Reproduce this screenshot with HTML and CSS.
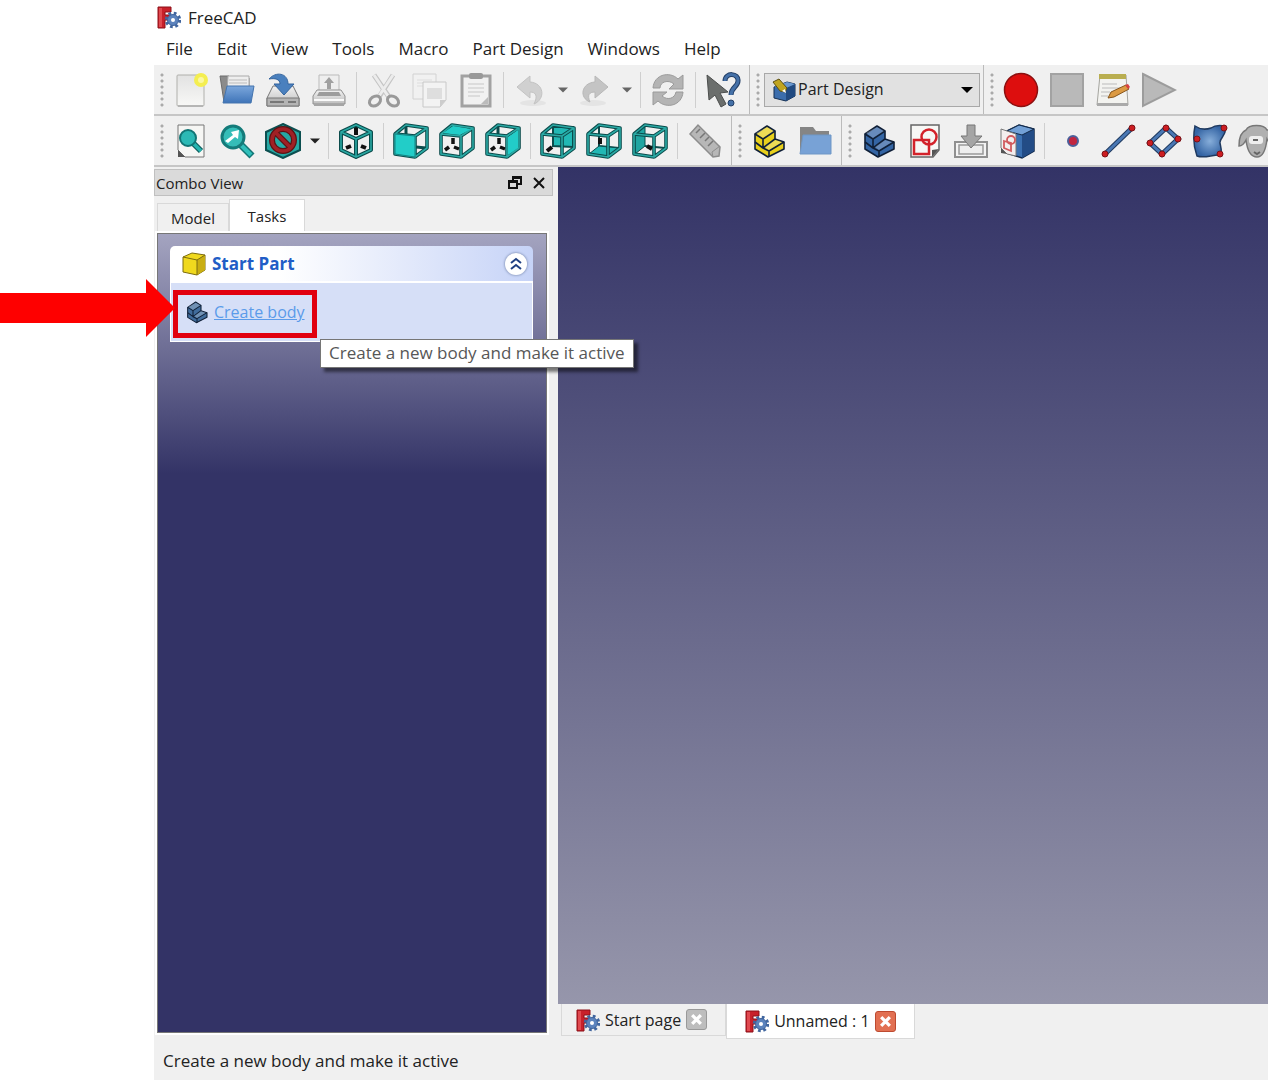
FILE: index.html
```html
<!DOCTYPE html>
<html lang="en">
<head>
    <meta charset="UTF-8">
    <meta name="viewport" content="width=device-width, initial-scale=1.0">
    <title>FreeCAD</title>
    <link rel="stylesheet" href="styles.css">
</head>
<body>
    <!-- shared icon shapes -->
    <svg class="sprite" aria-hidden="true">
        <defs>
            <linearGradient id="grey" x1="0" y1="0" x2="0" y2="1">
                <stop offset="0" stop-color="#f2f2f2"/><stop offset="1" stop-color="#bdbdbd"/>
            </linearGradient>
            <linearGradient id="blue" x1="0" y1="0" x2="0" y2="1">
                <stop offset="0" stop-color="#7ba7dc"/><stop offset="1" stop-color="#3f74b8"/>
            </linearGradient>
            <linearGradient id="page" x1="0" y1="0" x2="0" y2="1">
                <stop offset="0" stop-color="#e2e2e2"/><stop offset="1" stop-color="#f8f8f6"/>
            </linearGradient>
            <radialGradient id="surface">
                <stop offset="0" stop-color="#87aeda"/><stop offset="1" stop-color="#3565a4"/>
            </radialGradient>
        </defs>
        <symbol id="logo" viewBox="0 0 24 24">
            <path d="M1 2h13v5H8v3h5v5H8v8H1z" fill="#c8202a" stroke="#8c1018"/>
            <path d="M2 3h3v19H2z" fill="#e04a50"/>
            <circle cx="16" cy="15" r="6.5" fill="none" stroke="#41669f" stroke-width="3.5" stroke-dasharray="2.6 2.5"/>
            <circle cx="16" cy="15" r="5.5" fill="#5c83bd" stroke="#41669f"/>
            <circle cx="16" cy="15" r="2" fill="#fff"/>
        </symbol>
        <symbol id="frame" viewBox="0 0 36 36">
            <g fill="none" stroke-linejoin="round">
                <path d="M2 11l20 2v21L2 31zM2 11l11-9 21 3-12 8M34 5v20l-12 9" stroke="#0b4c4c" stroke-width="3.6"/>
                <path d="M2 11l20 2v21L2 31zM2 11l11-9 21 3-12 8M34 5v20l-12 9" stroke="#2aa9a4" stroke-width="1.6"/>
            </g>
        </symbol>
        <symbol id="axes" viewBox="0 0 36 36">
            <path d="M14 15v6M6 27l4-3M15 24l5 2" stroke="#111" stroke-width="3.5"/>
        </symbol>
        <symbol id="part" viewBox="0 0 36 36">
            <g stroke-width="1.6" stroke-linejoin="round" stroke="#102038">
                <path d="M4 11l12-8 8 5v8l9 3v7L17 34 4 26z" fill="currentColor"/>
                <path d="M4 11l8 5 12-8M12 16v9l12-9M12 25l6 3 15-9M18 28v6M4 19l8 6" fill="none"/>
            </g>
            <path d="M5 10l11-6 7 4-11 7zM14 24l10-7 7 2-13 8z" fill="#fff" opacity=".25"/>
        </symbol>
    </svg>

    <div class="app">
        <header class="title-bar">
            <svg class="logo"><use href="#logo"/></svg>
            <span>FreeCAD</span>
        </header>

        <nav class="menu">
            <a href="#">File</a>
            <a href="#">Edit</a>
            <a href="#">View</a>
            <a href="#">Tools</a>
            <a href="#">Macro</a>
            <a href="#">Part Design</a>
            <a href="#">Windows</a>
            <a href="#">Help</a>
        </nav>

        <div class="toolbar-row">
            <div class="toolbar">
                <span class="handle"></span>
                <button class="tool" aria-label="New">
                    <svg viewBox="0 0 36 36"><rect x="4" y="3" width="27" height="31" rx="1" fill="url(#page)" stroke="#b0b0ac"/><path d="M5 34h25" stroke="#999"/><circle cx="28" cy="8" r="7" fill="#f4ee50"/><circle cx="28" cy="8" r="3" fill="#fbf8a0"/></svg>
                </button>
                <button class="tool" aria-label="Open">
                    <svg viewBox="0 0 36 36"><path d="M1 4h9l2 2h18v24H5z" fill="#8b8b8b" stroke="#6d6d6d"/><path d="M9 4h21v18H8z" fill="#eee" stroke="#aaa"/><path d="M10 8h18M10 11h18" stroke="#bbb"/><path d="M8 14h27l-3 17H4z" fill="url(#blue)" stroke="#4474ae"/></svg>
                </button>
                <button class="tool" aria-label="Save">
                    <svg viewBox="0 0 36 36"><path d="M8 14h20l6 12v8H2v-8z" fill="url(#grey)" stroke="#777"/><path d="M2 26h32v8H2z" fill="#b4b4b4" stroke="#777"/><path d="M5 30h14M23 30h8" stroke="#777" stroke-width="2"/><path d="M4 7C11-1 23 1 23 12h6L19 23 9 12h6c0-5-5-6-11-5z" fill="#4a80be" stroke="#32639d"/></svg>
                </button>
                <button class="tool" aria-label="Print">
                    <svg viewBox="0 0 36 36"><path d="M8 3h20v17H8z" fill="#eee" stroke="#bbb"/><path d="M18 5l5 6h-3v6h-4v-6h-3z" fill="#a0a0a0"/><path d="M6 18h24l4 6v8H2v-8z" fill="url(#grey)" stroke="#909090"/><path d="M8 20h20l2 4H6z" fill="#9c9c9c"/><path d="M3 28h30" stroke="#fafafa" stroke-width="2"/><path d="M3 33h30" stroke="#a5a5a5" stroke-width="2"/></svg>
                </button>
                <span class="sep"></span>
                <button class="tool" aria-label="Cut">
                    <svg viewBox="0 0 36 36"><path d="M8 3l15 22M27 3L13 25" stroke="#c4c4c4" stroke-width="5"/><path d="M8 3l14 21M27 3L13 24" stroke="#ececec" stroke-width="3"/><g fill="none" stroke="#999" stroke-width="3"><ellipse cx="9" cy="29" rx="6" ry="4.5" transform="rotate(-35 9 29)"/><ellipse cx="27" cy="29" rx="6" ry="4.5" transform="rotate(35 27 29)"/></g></svg>
                </button>
                <button class="tool" aria-label="Copy">
                    <svg viewBox="0 0 36 36"><path d="M1 2h23v25H1z" fill="#f1f1f1" stroke="#d2d2d2"/><path d="M5 8h15M5 11h15M5 14h8" stroke="#ddd"/><path d="M11 10h23v18l-6 7H11z" fill="#f3f3f3" stroke="#c8c8c8"/><path d="M15 16h15v11H15z" fill="#dedede"/><path d="M34 28h-6v7z" fill="#ccc"/></svg>
                </button>
                <button class="tool" aria-label="Paste">
                    <svg viewBox="0 0 36 36"><rect x="4" y="4" width="28" height="30" fill="#f1f1f1" stroke="#a2a2a2" stroke-width="3"/><rect x="11" y="1" width="14" height="6" rx="2" fill="#999"/><path d="M10 12h16M10 16h16M10 20h16M10 24h12" stroke="#dcdcdc" stroke-width="2"/><path d="M30 25l-7 7h7z" fill="#bbb"/></svg>
                </button>
                <span class="sep"></span>
                <button class="tool" aria-label="Undo">
                    <svg viewBox="0 0 36 36"><ellipse cx="20" cy="31" rx="13" ry="3" fill="#e4e4e4"/><path d="M4 15L17 4v6c14 1 16 17 4 22 4-8 2-12-4-12v6z" fill="#d0d0d0" stroke="#c3c3c3"/></svg>
                </button>
                <button class="drop" aria-label="Undo history"><svg viewBox="0 0 12 6"><path d="M0 0h12L6 6z" fill="#666"/></svg></button>
                <button class="tool" aria-label="Redo">
                    <svg viewBox="0 0 36 36"><ellipse cx="16" cy="31" rx="13" ry="3" fill="#e4e4e4"/><path d="M31 15L18 4v6C4 11 2 26 13 30c-3-7-1-10 5-10v6z" fill="#c4c4c4" stroke="#b8b8b8"/></svg>
                </button>
                <button class="drop" aria-label="Redo history"><svg viewBox="0 0 12 6"><path d="M0 0h12L6 6z" fill="#666"/></svg></button>
                <span class="sep"></span>
                <button class="tool" aria-label="Refresh">
                    <svg viewBox="0 0 36 36"><g fill="#b4b4b4" stroke="#9a9a9a"><path d="M3 16C4 2 20-1 28 7l5-4v14H19l5-5c-6-5-14-2-14 4z"/><path d="M33 20c-1 14-17 17-25 9l-5 4V20h14l-5 4c6 5 13 2 14-4z"/></g></svg>
                </button>
                <span class="sep"></span>
                <button class="tool" aria-label="What's this?">
                    <svg viewBox="0 0 36 36"><path d="M20 9c0-9 14-8 13 0 0 6-7 6-7 14" fill="none" stroke="#233f66" stroke-width="5"/><path d="M20 9c0-9 14-8 13 0 0 6-7 6-7 14" fill="none" stroke="#4571a8" stroke-width="3"/><circle cx="26" cy="31" r="3" fill="#4571a8" stroke="#233f66"/><path d="M2 3l21 17-8 1 6 11-5 3-6-12-6 5z" fill="#6b6e6c" stroke="#4c4e4d"/></svg>
                </button>
            </div>
            <div class="toolbar">
                <span class="handle"></span>
                <div class="workbench">
                    <svg class="workbench-icon" viewBox="0 0 24 24"><path d="M2 9l13-5 8 2v12l-9 5-12-3z" fill="#3b6dac" stroke="#152f52"/><path d="M14 10l9-4v12l-9 5z" fill="#214a80"/><path d="M2 9l13-5 8 2-9 4z" fill="#6a98cf"/><path d="M1 4l6-3 8 9-2 4-5-1z" fill="#c0a520" stroke="#5d5010"/><path d="M10 13l3-2 1 4z" fill="#fff"/></svg>
                    <select aria-label="Workbench">
                        <option>Part Design</option>
                    </select>
                    <svg class="workbench-arrow" viewBox="0 0 12 6"><path d="M0 0h12L6 6z"/></svg>
                </div>
            </div>
            <div class="toolbar last">
                <span class="handle"></span>
                <button class="tool" aria-label="Record macro">
                    <svg viewBox="0 0 36 36"><circle cx="18" cy="18" r="16.5" fill="#dd0e0e" stroke="#8c1010" stroke-width="1.5"/></svg>
                </button>
                <button class="tool" aria-label="Stop macro">
                    <svg viewBox="0 0 36 36"><rect x="2" y="2" width="32" height="32" fill="#b9b9b9" stroke="#a2a2a2" stroke-width="2"/></svg>
                </button>
                <button class="tool" aria-label="Macros">
                    <svg viewBox="0 0 36 36"><path d="M5 3h26l2 30H2z" fill="#f3f3f0" stroke="#a5a5a0"/><path d="M4 2h27v5H4z" fill="#b9ae50"/><path d="M2 31h31v3H2z" fill="#aaa"/><path d="M7 12h15M7 16h19M6 20h9M6 24h7" stroke="#bbb"/><path d="M13 26l3-6 15-7 3 4-15 8z" fill="#dc9a42" stroke="#87551c"/><path d="M30 13l3-1 2 3-2 2z" fill="#d84040"/></svg>
                </button>
                <button class="tool" aria-label="Run macro">
                    <svg viewBox="0 0 36 36"><path d="M2 2l32 16L2 34z" fill="#b9b9b9" stroke="#9c9c9c" stroke-width="2"/></svg>
                </button>
            </div>
        </div>

        <div class="toolbar-row">
            <div class="toolbar">
                <span class="handle"></span>
                <button class="tool" aria-label="Fit all">
                    <svg viewBox="0 0 36 36"><path d="M5 2h26v32H12l-7-7z" fill="#f6f6f4" stroke="#777"/><path d="M5 27l7 7H5z" fill="#555"/><path d="M20 20l8 8" stroke="#0d5c5c" stroke-width="6"/><path d="M20 20l8 8" stroke="#26b5b0" stroke-width="3.5"/><circle cx="15" cy="15" r="8" fill="#2cb9b5" stroke="#127575" stroke-width="2"/></svg>
                </button>
                <button class="tool" aria-label="Fit selection">
                    <svg viewBox="0 0 36 36"><path d="M20 20l13 13" stroke="#127575" stroke-width="7"/><path d="M20 20l12 12" stroke="#30bfba" stroke-width="4"/><circle cx="14" cy="14" r="11" fill="#35bdb8" stroke="#147b7a" stroke-width="3"/><path d="M6 18l8-6-2-3 8-2-1 9-3-2-7 6z" fill="#fff"/></svg>
                </button>
                <button class="tool" aria-label="Draw style">
                    <svg viewBox="0 0 36 36"><path d="M18 1l17 8v18l-17 8-17-8V9z" fill="#26a8a4" stroke="#0c4f50" stroke-width="2"/><g fill="none"><circle cx="18" cy="17" r="11" stroke="#5c1214" stroke-width="6"/><path d="M10 9l16 16" stroke="#5c1214" stroke-width="6"/><circle cx="18" cy="17" r="11" stroke="#a02025" stroke-width="3.5"/><path d="M10 9l16 16" stroke="#a02025" stroke-width="3.5"/></g></svg>
                </button>
                <button class="drop" aria-label="Draw styles"><svg viewBox="0 0 12 6"><path d="M0 0h12L6 6z" fill="#222"/></svg></button>
                <span class="sep"></span>
                <button class="tool" aria-label="Isometric">
                    <svg viewBox="0 0 36 36"><path d="M18 4v8M8 25l5-2M23 23l5 2" stroke="#111" stroke-width="4"/><g fill="none" stroke-linejoin="round"><path d="M18 2l15 7v18l-15 7-15-7V9zM3 9l15 7 15-7M18 16v18" stroke="#0b4c4c" stroke-width="4"/><path d="M18 2l15 7v18l-15 7-15-7V9zM3 9l15 7 15-7M18 16v18" stroke="#2aa9a4" stroke-width="1.6"/></g></svg>
                </button>
                <span class="sep"></span>
                <button class="tool" aria-label="Front">
                    <svg viewBox="0 0 36 36"><path d="M13 3v8M23 24l10 1" stroke="#0b4c4c" stroke-width="3"/><use href="#frame"/><path d="M2 11l20 2v21L2 31z" fill="#22cdc8" stroke="#128584"/></svg>
                </button>
                <button class="tool" aria-label="Top">
                    <svg viewBox="0 0 36 36"><use href="#axes"/><use href="#frame"/><path d="M4 10l10-7 18 3-11 6z" fill="#22cdc8"/></svg>
                </button>
                <button class="tool" aria-label="Right">
                    <svg viewBox="0 0 36 36"><path d="M13 3v8" stroke="#0b4c4c" stroke-width="3"/><use href="#axes"/><use href="#frame"/><path d="M23 14l10-7v18l-10 7z" fill="#22cdc8"/></svg>
                </button>
                <span class="sep"></span>
                <button class="tool" aria-label="Rear">
                    <svg viewBox="0 0 36 36"><path d="M13 4h20v20l-20-1z" fill="#22b8b4" stroke="#0b4c4c" stroke-width="2"/><path d="M7 28l5-4" stroke="#111" stroke-width="4"/><use href="#frame"/></svg>
                </button>
                <button class="tool" aria-label="Bottom">
                    <svg viewBox="0 0 36 36"><path d="M13 3v20l20 2" fill="none" stroke="#0b4c4c" stroke-width="2"/><path d="M14 15v6" stroke="#111" stroke-width="4"/><path d="M3 31l10-8 20 2-11 9z" fill="#22b8b4" stroke="#0b4c4c"/><use href="#frame"/></svg>
                </button>
                <button class="tool" aria-label="Left">
                    <svg viewBox="0 0 36 36"><path d="M13 23l20 2" stroke="#0b4c4c" stroke-width="2"/><path d="M2 11l11-8v20L3 31z" fill="#1fa5a1" stroke="#0b4c4c"/><path d="M15 23l5 3" stroke="#111" stroke-width="4"/><use href="#frame"/></svg>
                </button>
                <span class="sep"></span>
                <button class="tool" aria-label="Measure distance">
                    <svg viewBox="0 0 36 36"><path d="M3 11l8-9 22 22-1 9-6 1z" fill="#b7b7b7" stroke="#8c8c8c" stroke-width="1.5"/><path d="M26 34l-1-5 8-6" fill="none" stroke="#8c8c8c"/><path d="M13 6l-4 4M18 10l-5 5M22 14l-4 4M26 18l-5 5" stroke="#777" stroke-width="1.5"/></svg>
                </button>
            </div>
            <div class="toolbar">
                <span class="handle"></span>
                <button class="tool yellow" aria-label="Create part"><svg><use href="#part"/></svg></button>
                <button class="tool" aria-label="Create group">
                    <svg viewBox="0 0 36 36"><path d="M3 4h13l3 4h13v20H3z" fill="#858585"/><path d="M6 12h28v19H3z" fill="#78a2d6" stroke="#6f97c6"/></svg>
                </button>
            </div>
            <div class="toolbar last">
                <span class="handle"></span>
                <button class="tool blue" aria-label="Create body"><svg><use href="#part"/></svg></button>
                <button class="tool" aria-label="Create sketch">
                    <svg viewBox="0 0 36 36"><path d="M4 2h28v25l-6 7H4z" fill="#f7f7f5" stroke="#666" stroke-width="1.5"/><path d="M32 26l-7 8v-7z" fill="#555"/><g fill="none" stroke="#d3222a" stroke-width="2.5"><path d="M7 17h15v14H7z"/><circle cx="22" cy="14" r="7.5"/></g></svg>
                </button>
                <button class="tool" aria-label="Map sketch">
                    <svg viewBox="0 0 36 36"><path d="M2 19h32v15H2z" fill="#f4f4f4" stroke="#909090" stroke-width="2"/><path d="M6 22h24v9H6z" fill="#eee" stroke="#999" stroke-width="1.5"/><path d="M14 2h8v11h7L18 25 8 13h6z" fill="#a5a5a5" stroke="#777"/></svg>
                </button>
                <button class="tool" aria-label="Edit sketch">
                    <svg viewBox="0 0 36 36"><path d="M8 8l12-6 15 4v22l-12 7-15-5z" fill="#3b70b1" stroke="#11294a" stroke-width="1.5"/><path d="M23 11l12-5v22l-12 7z" fill="#234c86"/><path d="M8 8l12-6 15 4-12 6z" fill="#72a0d6" stroke="#11294a"/><path d="M2 6l15 5v22l-9-2-6-6z" fill="#f3eeee" stroke="#777"/><path d="M2 25l6 6-6-1z" fill="#555"/><g fill="none" stroke="#d15a5e" stroke-width="1.8"><path d="M5 18l7 2v8l-7-3z"/><circle cx="12" cy="17" r="4"/></g></svg>
                </button>
                <span class="sep"></span>
                <button class="tool" aria-label="Datum point">
                    <svg viewBox="0 0 36 36"><circle cx="19" cy="18" r="5" fill="#c12640" stroke="#4b5f9a" stroke-width="2"/></svg>
                </button>
                <button class="tool" aria-label="Datum line">
                    <svg viewBox="0 0 36 36"><path d="M5 31L32 5" stroke="#1f3a60" stroke-width="5"/><path d="M5 31L32 5" stroke="#4a78b4" stroke-width="3"/><g fill="#cc1d22" stroke="#7c1216"><circle cx="5" cy="31" r="3"/><circle cx="32" cy="5" r="3"/></g></svg>
                </button>
                <button class="tool" aria-label="Datum plane">
                    <svg viewBox="0 0 36 36"><g fill="none"><path d="M20 5l12 11-16 15L4 20z" stroke="#1f3a60" stroke-width="5"/><path d="M20 5l12 11-16 15L4 20z" stroke="#4a78b4" stroke-width="3"/></g><g fill="#cc1d22" stroke="#7c1216"><circle cx="20" cy="5" r="3"/><circle cx="32" cy="16" r="3"/><circle cx="16" cy="31" r="3"/><circle cx="4" cy="20" r="3"/></g></svg>
                </button>
                <button class="tool" aria-label="Shape binder">
                    <svg viewBox="0 0 36 36"><path d="M3 3c7 5 13 3 16 2 4-3 9-3 14-2 3 9-6 12-5 17 1 5 2 8 1 12-8-1-16 4-24 1-3-8-4-20-2-30z" fill="url(#surface)" stroke="#1f3a60" stroke-width="1.5"/><g fill="#cc1d22" stroke="#7c1216"><circle cx="32" cy="5" r="3"/><circle cx="5" cy="16" r="3"/><circle cx="28" cy="31" r="3"/></g></svg>
                </button>
                <button class="tool" aria-label="Clone">
                    <svg viewBox="0 0 36 36"><path d="M8 7c3-6 18-6 21 0 5 0 6 6 6 13-4 0-5-2-6-4-1 9-3 18-10 18S9 25 8 17c-2 4-4 6-7 6 0-9 2-14 7-16z" fill="#b0b0b0" stroke="#777" stroke-width="1.5"/><rect x="11" y="13" width="14" height="8" rx="3" fill="#eee"/><path d="M15 17h5M16 29l3 2 3-2" fill="none" stroke="#666" stroke-width="2"/></svg>
                </button>
            </div>
        </div>

        <main class="workspace">
            <aside class="dock">
                <div class="dock-title">
                    <span>Combo View</span>
                    <button class="dock-button" aria-label="Float">
                        <svg viewBox="0 0 14 14"><path d="M5 5V1h8v7H9M5 2h8" fill="none" stroke="#111" stroke-width="2"/><path d="M1 5h8v7H1zM1 6h8" fill="none" stroke="#111" stroke-width="2"/></svg>
                    </button>
                    <button class="dock-button" aria-label="Close">
                        <svg viewBox="0 0 14 14"><path d="M2 2l10 10M12 2L2 12" stroke="#111" stroke-width="2"/></svg>
                    </button>
                </div>
                <div class="tabs">
                    <button class="tab">Model</button>
                    <button class="tab active">Tasks</button>
                </div>
                <div class="task-panel">
                    <section class="task-box">
                        <div class="task-header">
                            <svg class="task-icon" viewBox="0 0 24 24"><path d="M1 5l9-4 13 2v15l-8 5-14-3z" fill="#f0d91e" stroke="#7c6c10"/><path d="M15 8l8-5v15l-8 5z" fill="#c9ae12"/><path d="M1 5l14 3v15M15 8l8-5" fill="none" stroke="#7c6c10"/></svg>
                            <h2>Start Part</h2>
                            <button class="collapse" aria-label="Collapse">
                                <svg viewBox="0 0 12 14"><path d="M1 6l5-4 5 4M1 12l5-4 5 4" fill="none" stroke="#1f3f82" stroke-width="2"/></svg>
                            </button>
                        </div>
                        <div class="task-body">
                            <div class="highlight">
                                <svg class="pointer" viewBox="0 0 176 58"><path d="M0 14h147V0l29 29-29 29V44H0z" fill="#fe0000"/></svg>
                                <svg class="body-icon"><use href="#part"/></svg>
                                <a href="#">Create body</a>
                                <div class="tooltip" role="tooltip">Create a new body and make it active</div>
                            </div>
                        </div>
                    </section>
                </div>
            </aside>

            <section class="documents">
                <div class="viewport"></div>
                <div class="doc-tabs">
                    <div class="doc-tab">
                        <svg class="logo"><use href="#logo"/></svg>
                        <span>Start page</span>
                        <button class="doc-close" aria-label="Close Start page"><svg viewBox="0 0 12 12"><path d="M2 2l8 8M10 2l-8 8" stroke="#fff" stroke-width="3"/></svg></button>
                    </div>
                    <div class="doc-tab active">
                        <svg class="logo"><use href="#logo"/></svg>
                        <span>Unnamed : 1</span>
                        <button class="doc-close" aria-label="Close Unnamed"><svg viewBox="0 0 12 12"><path d="M2 2l8 8M10 2l-8 8" stroke="#fff" stroke-width="3"/></svg></button>
                    </div>
                </div>
            </section>
        </main>

        <footer class="status">Create a new body and make it active</footer>
    </div>
</body>
</html>
```
FILE: styles.css
```css
* {
    box-sizing: border-box;
}
body {
    margin: 0;
    background-color: white;
    font-family: "Open Sans", "Noto Sans", sans-serif;
    font-size: 17px;
    color: #222;
}
button {
    font: inherit;
    color: inherit;
    padding: 0;
    border: none;
    background: none;
}
svg {
    display: block;
    flex: none;
}
.sprite {
    position: absolute;
    width: 0;
    height: 0;
}
.app {
    display: flex;
    flex-direction: column;
    height: 100vh;
    margin-left: 154px;
}
.title-bar {
    display: flex;
    align-items: center;
    gap: 7px;
    height: 34px;
    padding-left: 3px;
}
.logo {
    width: 24px;
    height: 24px;
}
.menu {
    display: flex;
    gap: 24px;
    height: 31px;
    padding-left: 12px;
    line-height: 30px;
}
.menu a {
    color: #222;
    text-decoration: none;
}

/* toolbars */
.toolbar-row {
    display: flex;
    flex: none;
    height: 51px;
    overflow: hidden;
    background-color: #f0f0f0;
    border-bottom: 2px solid #c6c6c6;
}
.toolbar {
    display: flex;
    flex: none;
    align-items: center;
    padding-right: 3px;
    border-right: 1px solid #bbb;
}
.toolbar.last {
    border-right: none;
}
.handle {
    width: 4px;
    height: 36px;
    margin: 0 4px 0 6px;
    background: radial-gradient(circle, #aaa 1px, transparent 2px) 0 0 / 4px 6px;
}
.tool {
    width: 46px;
    height: 48px;
    padding: 0 5px;
}
.tool svg {
    width: 36px;
    height: 36px;
}
.drop {
    width: 18px;
    padding: 0 4px;
}
.drop svg {
    width: 10px;
    height: 6px;
}
.sep {
    width: 1px;
    height: 36px;
    margin: 0 4px;
    background-color: #cfcfcf;
}
.yellow {
    color: #e8d01c;
}
.blue {
    color: #3465a4;
}
.workbench {
    position: relative;
}
.workbench select {
    width: 216px;
    height: 34px;
    padding: 0 30px 2px 33px;
    appearance: none;
    background-color: #e1e1e1;
    border: 1px solid #a8a8a8;
    border-radius: 0;
    font: inherit;
    font-size: 16px;
    color: #222;
}
.workbench-icon {
    position: absolute;
    left: 8px;
    top: 5px;
    width: 24px;
    height: 24px;
}
.workbench-arrow {
    position: absolute;
    right: 7px;
    top: 14px;
    width: 12px;
    height: 6px;
}

/* combo view */
.workspace {
    display: flex;
    flex: 1;
    min-height: 0;
    background-color: #f0f0f0;
}
.dock {
    display: flex;
    flex-direction: column;
    flex: none;
    width: 404px;
    padding: 2px 5px 6px 0;
}
.dock-title {
    display: flex;
    align-items: center;
    gap: 10px;
    height: 27px;
    padding: 0 6px 0 1px;
    background-color: #dadada;
    border: 1px solid #c0c0c0;
    font-size: 15px;
    line-height: 24px;
}
.dock-title span {
    flex: 1;
}
.dock-button,
.dock-button svg {
    width: 14px;
    height: 14px;
}
.tabs {
    display: flex;
    align-items: flex-end;
    height: 35px;
    padding-left: 3px;
    font-size: 15px;
}
.tab {
    height: 28px;
    width: 72px;
    border: 1px solid #d9d9d9;
    border-bottom: none;
}
.tab.active {
    height: 32px;
    width: 76px;
    background-color: white;
}
.task-panel {
    flex: 1;
    margin: 2px 6px 4px 3px;
    padding: 12px 13px 12px 12px;
    background: linear-gradient(#a4a4c0, #333366 240px);
    border: 1px solid #777;
    outline: 2px solid white;
}
.task-header {
    display: flex;
    align-items: center;
    height: 37px;
    padding: 0 6px 0 12px;
    background: linear-gradient(to right, white 30%, #c6d3f7);
    border-bottom: 2px solid white;
    border-radius: 5px 5px 0 0;
}
.task-icon {
    width: 24px;
    height: 24px;
}
.task-header h2 {
    flex: 1;
    margin: 0 6px;
    font-size: 17px;
    color: #215dc6;
}
.collapse {
    width: 22px;
    height: 22px;
    padding: 4px 5px;
    background-color: white;
    border-radius: 50%;
    box-shadow: 0 0 2px 1px #9ba9cc;
}
.collapse svg {
    width: 12px;
    height: 14px;
}
.task-body {
    padding: 7px 2px 3px;
    background-color: #d6dff7;
    border: 1px solid white;
    border-top: none;
}
.highlight {
    position: relative;
    display: flex;
    align-items: center;
    gap: 5px;
    width: 144px;
    height: 48px;
    padding: 0 0 4px 7px;
    border: 5px solid #e1000f;
}
.highlight a {
    font-size: 16px;
    color: #5b9bea;
}
.body-icon {
    width: 24px;
    height: 24px;
    color: #406c9c;
}
.pointer {
    position: absolute;
    right: 137px;
    top: -16px;
    width: 176px;
    height: 58px;
}
.tooltip {
    position: absolute;
    z-index: 1;
    left: 142px;
    top: 44px;
    height: 29px;
    padding: 0 8px;
    line-height: 26px;
    white-space: nowrap;
    color: #575757;
    background-color: white;
    border: 1px solid #767676;
    box-shadow: 4px 4px 3px rgba(0, 0, 0, 0.5);
}

/* documents */
.documents {
    display: flex;
    flex: 1;
    flex-direction: column;
    min-width: 0;
}
.viewport {
    flex: 1;
    background: linear-gradient(#333366, #9696ab);
}
.doc-tabs {
    display: flex;
    align-items: flex-start;
    height: 39px;
    padding-left: 3px;
}
.doc-tab {
    display: flex;
    align-items: center;
    gap: 5px;
    height: 32px;
    padding: 0 18px 0 14px;
    border: 1px solid #d9d9d9;
    border-top: none;
    font-size: 16px;
}
.doc-tab.active {
    height: 35px;
    padding: 0 18px;
    background-color: white;
}
.doc-close {
    width: 21px;
    height: 21px;
    padding: 3px;
    background-color: #bdbdbd;
    border: 1px solid #999;
    border-radius: 3px;
}
.doc-tab.active .doc-close {
    background-color: #e27052;
    border-color: #bd4a30;
}
.doc-close svg {
    width: 13px;
    height: 13px;
}
.status {
    height: 37px;
    padding-left: 9px;
    line-height: 36px;
    background-color: #f0f0f0;
}
```
